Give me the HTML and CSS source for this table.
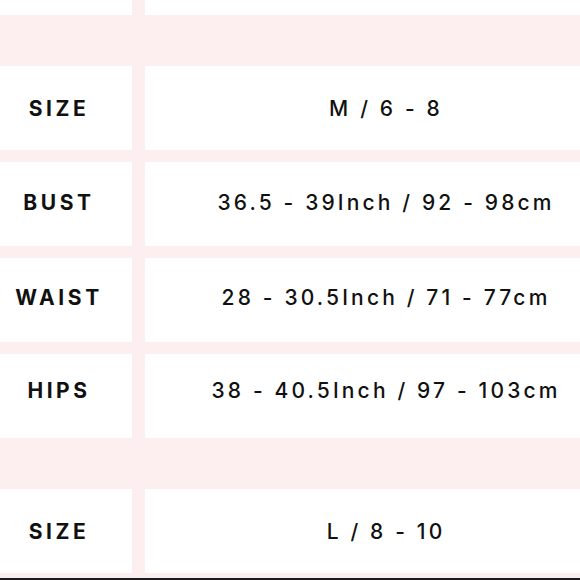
FILE: index.html
```html
<!DOCTYPE html>
<html>
<head>
<meta charset="utf-8">
<link rel="stylesheet" href="styles.css">
</head>
<body>
<div class="table">
  <div class="cell top"></div><div class="cell top"></div>
  <div class="band"></div>
  <div class="cell label">SIZE</div><div class="cell value">M / 6 - 8</div>
  <div class="cell label up-s">BUST</div><div class="cell value up-s">36.5 - 39Inch / 92 - 98cm</div>
  <div class="cell label up-m">WAIST</div><div class="cell value up-m">28 - 30.5Inch / 71 - 77cm</div>
  <div class="cell label up-l">HIPS</div><div class="cell value up-l">38 - 40.5Inch / 97 - 103cm</div>
  <div class="band"></div>
  <div class="cell label">SIZE</div><div class="cell value">L / 8 - 10</div>
</div>
<div class="tail"></div>
<div class="rule"></div>
</body>
</html>
```
FILE: styles.css
```css
html, body {
  margin: 0;
  padding: 0;
  background: #fdefef;
  width: 580px;
  height: 580px;
  overflow: hidden;
}
.table {
  display: grid;
  grid-template-columns: 132px 435px;
  grid-template-rows: 15px 27px 84px 84px 84px 84px 27px 84px;
  column-gap: 13px;
  row-gap: 12px;
}
.cell {
  background: #fff;
  display: flex;
  align-items: center;
  justify-content: center;
  font-family: Inter, "Liberation Sans", sans-serif;
  font-size: 21px;
  color: #111;
  white-space: nowrap;
}
.band {
  grid-column: 1 / 3;
}
.label {
  font-weight: 700;
  letter-spacing: 0.17em;
  padding-right: 14px;
}
.value {
  font-weight: 500;
  letter-spacing: 0.15em;
  padding-left: 47px;
}
.up-s { padding-bottom: 4px; }
.up-m { padding-bottom: 6px; }
.up-l { padding-bottom: 12px; }
.tail {
  height: 5px;
}
.rule {
  height: 2px;
  background: #1c1c1c;
}
```
